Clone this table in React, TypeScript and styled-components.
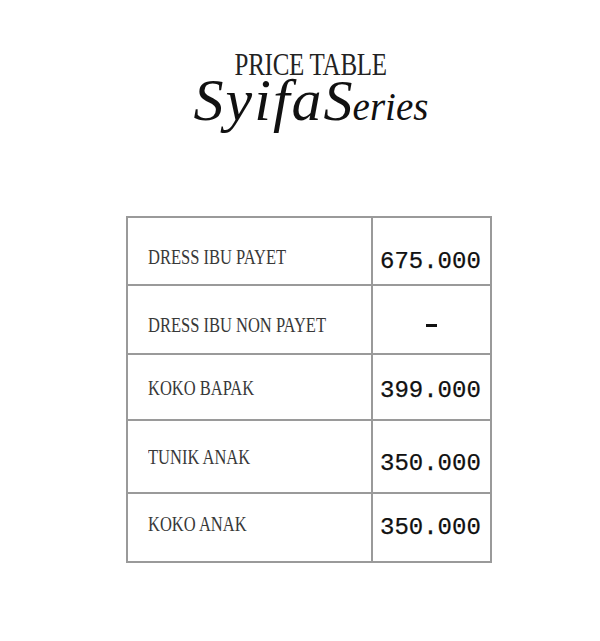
import React, { FunctionComponent } from "react"
import styled, { createGlobalStyle } from "styled-components"

const GlobalStyle = createGlobalStyle`
  html, body {
    margin: 0;
    padding: 0;
    background: #ffffff;
  }
  body {
    font-family: "Liberation Serif", serif;
    color: #1a1a1a;
  }
`

const Page = styled.div`
  width: 600px;
  min-height: 641px;
  padding-top: 48px;
  box-sizing: border-box;
  display: flex;
  flex-direction: column;
`

const Header = styled.header`
  display: flex;
  flex-direction: column;
  align-items: center;
  padding-left: 22px;
`

const Title = styled.h1`
  margin: 0;
  font-family: "Liberation Serif", serif;
  font-weight: 400;
  font-size: 32px;
  line-height: 32px;
  color: #222;
  transform: scaleX(0.78);
  letter-spacing: -0.3px;
`

const ScriptLine = styled.div`
  font-family: "Liberation Serif", serif;
  font-style: italic;
  line-height: 40px;
  color: #111;
  white-space: nowrap;
`

const Script = styled.span<{ $size: number; $spacing?: number }>`
  display: inline-block;
  font-size: ${(p) => p.$size}px;
  letter-spacing: ${(p) => p.$spacing ?? 0}px;
  line-height: 40px;
  height: 40px;
`

const Table = styled.div`
  margin: 81px 0 0 126px;
  width: 366px;
  border: 2px solid #9a9a9a;
  box-sizing: border-box;
  display: flex;
  flex-direction: column;
`

const Row = styled.div<{ $height: number }>`
  display: grid;
  grid-template-columns: 245px 1fr;
  height: ${(p) => p.$height}px;
  box-sizing: border-box;
  border-bottom: 2px solid #9a9a9a;
  &:last-child {
    border-bottom: none;
  }
`

const shift = (s: number) =>
  s >= 0 ? `padding-top: ${s * 2}px;` : `padding-bottom: ${-s * 2}px;`

const LabelCell = styled.div<{ $shift: number }>`
  display: flex;
  align-items: center;
  padding-left: 20px;
  box-sizing: border-box;
  border-right: 2px solid #9a9a9a;
  ${(p) => shift(p.$shift)}
`

const Label = styled.span`
  display: inline-block;
  font-family: "Liberation Serif", serif;
  font-size: 22px;
  line-height: 1;
  color: #383838;
  white-space: nowrap;
  transform: scaleX(0.75);
  transform-origin: left center;
`

const PriceCell = styled.div<{ $shift: number; $center?: boolean }>`
  display: flex;
  align-items: center;
  justify-content: ${(p) => (p.$center ? "center" : "flex-start")};
  padding-left: ${(p) => (p.$center ? 0 : 7)}px;
  box-sizing: border-box;
  ${(p) => shift(p.$shift)}
`

const Price = styled.span`
  font-family: "Liberation Mono", monospace;
  font-size: 24px;
  line-height: 1;
  color: #111;
  white-space: nowrap;
  -webkit-text-stroke: 0.25px #111;
`

const Dash = styled.span`
  display: block;
  width: 11px;
  height: 3px;
  background: #111;
`

interface Item {
  name: string
  price: string | null
  height: number
  labelShift: number
  priceShift: number
}

const items: Item[] = [
  { name: "DRESS IBU PAYET", price: "675.000", height: 68, labelShift: 6, priceShift: 11 },
  { name: "DRESS IBU NON PAYET", price: null, height: 69, labelShift: 5, priceShift: 6 },
  { name: "KOKO BAPAK", price: "399.000", height: 66, labelShift: 1, priceShift: 4 },
  { name: "TUNIK ANAK", price: "350.000", height: 73, labelShift: 0, priceShift: 7 },
  { name: "KOKO ANAK", price: "350.000", height: 67, labelShift: -4, priceShift: 0 },
]

const App: FunctionComponent = () => (
  <>
    <GlobalStyle />
    <Page>
      <Header>
        <Title>PRICE TABLE</Title>
        <ScriptLine>
          <Script $size={60} $spacing={2}>Syifa</Script>
          <Script $size={58}>S</Script>
          <Script $size={39}>eries</Script>
        </ScriptLine>
      </Header>
      <Table>
        {items.map((item) => (
          <Row key={item.name} $height={item.height}>
            <LabelCell $shift={item.labelShift}>
              <Label>{item.name}</Label>
            </LabelCell>
            <PriceCell $shift={item.priceShift} $center={!item.price}>
              {item.price ? <Price>{item.price}</Price> : <Dash />}
            </PriceCell>
          </Row>
        ))}
      </Table>
    </Page>
  </>
)

export default App
